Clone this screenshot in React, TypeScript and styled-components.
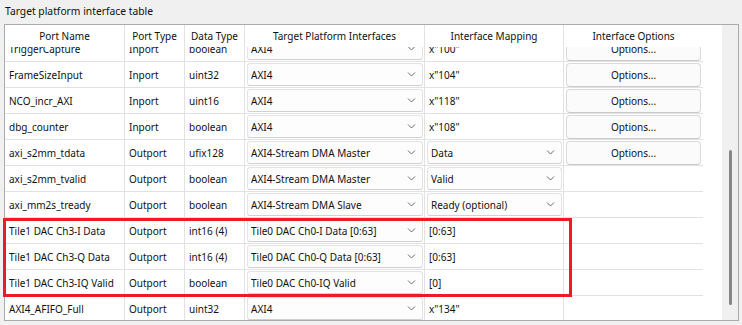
import React, { FC } from "react";
import styled, { createGlobalStyle } from "styled-components";

interface IPortRow {
  name: string;
  portType: string;
  dataType: string;
  target: string;
  mapping: string;
  mappingCombo?: boolean;
  options?: boolean;
}

const rows: IPortRow[] = [
  { name: "TriggerCapture", portType: "Inport", dataType: "boolean", target: "AXI4", mapping: 'x"100"', options: true },
  { name: "FrameSizeInput", portType: "Inport", dataType: "uint32", target: "AXI4", mapping: 'x"104"', options: true },
  { name: "NCO_incr_AXI", portType: "Inport", dataType: "uint16", target: "AXI4", mapping: 'x"118"', options: true },
  { name: "dbg_counter", portType: "Inport", dataType: "boolean", target: "AXI4", mapping: 'x"108"', options: true },
  { name: "axi_s2mm_tdata", portType: "Outport", dataType: "ufix128", target: "AXI4-Stream DMA Master", mapping: "Data", mappingCombo: true, options: true },
  { name: "axi_s2mm_tvalid", portType: "Outport", dataType: "boolean", target: "AXI4-Stream DMA Master", mapping: "Valid", mappingCombo: true },
  { name: "axi_mm2s_tready", portType: "Outport", dataType: "boolean", target: "AXI4-Stream DMA Slave", mapping: "Ready (optional)", mappingCombo: true },
  { name: "Tile1 DAC Ch3-I Data", portType: "Outport", dataType: "int16 (4)", target: "Tile0 DAC Ch0-I Data [0:63]", mapping: "[0:63]" },
  { name: "Tile1 DAC Ch3-Q Data", portType: "Outport", dataType: "int16 (4)", target: "Tile0 DAC Ch0-Q Data [0:63]", mapping: "[0:63]" },
  { name: "Tile1 DAC Ch3-IQ Valid", portType: "Outport", dataType: "boolean", target: "Tile0 DAC Ch0-IQ Valid", mapping: "[0]" },
  { name: "AXI4_AFIFO_Full", portType: "Outport", dataType: "uint32", target: "AXI4", mapping: 'x"134"' },
];

const headers = [
  "Port Name",
  "Port Type",
  "Data Type",
  "Target Platform Interfaces",
  "Interface Mapping",
  "Interface Options",
];

const Chevron: FC = () => (
  <svg width="9" height="5" viewBox="0 0 9 5">
    <polyline points="1,0.5 4.5,4 8,0.5" fill="none" stroke="#6a6a6a" strokeWidth="1" />
  </svg>
);

const Combo: FC<{ value: string }> = ({ value }) => (
  <ComboBox>
    <ComboText>{value}</ComboText>
    <Chevron />
  </ComboBox>
);

const App: FC = () => {
  return (
    <>
      <GlobalStyle />
      <Page>
        <Title>Target platform interface table</Title>
        <Frame>
          <Viewport>
            <HeaderRow>
              {headers.map((h) => (
                <HeaderCell key={h}>{h}</HeaderCell>
              ))}
            </HeaderRow>
            <Body>
              {rows.map((row) => (
                <React.Fragment key={row.name}>
                  <Cell>{row.name}</Cell>
                  <Cell>{row.portType}</Cell>
                  <Cell>{row.dataType}</Cell>
                  <Cell $combo>
                    <Combo value={row.target} />
                  </Cell>
                  {row.mappingCombo ? (
                    <Cell $combo>
                      <Combo value={row.mapping} />
                    </Cell>
                  ) : (
                    <Cell>{row.mapping}</Cell>
                  )}
                  <Cell $button>
                    {row.options && <OptionsButton>Options...</OptionsButton>}
                  </Cell>
                </React.Fragment>
              ))}
            </Body>
          </Viewport>
          <Track>
            <Thumb />
          </Track>
          <Highlight />
        </Frame>
      </Page>
    </>
  );
};

const GlobalStyle = createGlobalStyle`
  html, body {
    margin: 0;
    padding: 0;
    background: #f0f0f0;
  }
  body {
    font-family: "Noto Sans", "Open Sans", sans-serif;
    font-size: 10px;
    color: #111111;
  }
`;

const Page = styled.div`
  width: 742px;
  height: 325px;
  overflow: hidden;
  background: #f0f0f0;
`;

const Title = styled.div`
  height: 24px;
  padding: 3px 0 0 5px;
  box-sizing: border-box;
  line-height: 16px;
  font-size: 10.3px;
`;

const Frame = styled.div`
  position: relative;
  margin-left: 4px;
  width: 735px;
  height: 297px;
  box-sizing: border-box;
  border: 1px solid #ababab;
  display: flex;
  background: #ffffff;
`;

const Viewport = styled.div`
  flex: 1;
  overflow: hidden;
  background: #ffffff;
`;

const columns = "120px 60px 60px 180px 139px 140px";

const HeaderRow = styled.div`
  position: relative;
  z-index: 1;
  display: grid;
  grid-template-columns: ${columns};
  height: 22px;
  background: #ffffff;
`;

const HeaderCell = styled.div`
  display: flex;
  align-items: center;
  justify-content: center;
  border-right: 1px solid #e2e2e2;
  white-space: nowrap;
`;

const Body = styled.div`
  margin-top: -11px;
  display: grid;
  grid-template-columns: ${columns};
  grid-auto-rows: 26px;
`;

const Cell = styled.div<{ $combo?: boolean; $button?: boolean }>`
  display: flex;
  align-items: center;
  box-sizing: border-box;
  border-right: 1px solid #e2e2e2;
  border-bottom: 1px solid #e2e2e2;
  padding: ${(p) => (p.$combo ? "0 1px 0 2px" : p.$button ? "0 2px" : "0 4px")};
  white-space: nowrap;
  overflow: hidden;
`;

const ComboBox = styled.div`
  flex: 1;
  height: 23px;
  box-sizing: border-box;
  display: flex;
  align-items: center;
  padding: 0 6px 0 3px;
  border: 1px solid #e3e3e3;
  border-bottom-color: #d0d0d0;
  border-radius: 3px;
  background: #fdfdfd;
`;

const ComboText = styled.span`
  flex: 1;
  overflow: hidden;
`;

const OptionsButton = styled.div`
  flex: 1;
  height: 24px;
  box-sizing: border-box;
  display: flex;
  align-items: center;
  justify-content: center;
  border: 1px solid #dadada;
  border-bottom-color: #cacaca;
  border-radius: 4px;
  background: #fbfbfb;
`;

const Track = styled.div`
  width: 16px;
  padding: 125px 0 0 7px;
  box-sizing: border-box;
  background: #f0f0f0;
  margin-left: 19px;
`;

const Thumb = styled.div`
  width: 3px;
  height: 155px;
  border-radius: 2px;
  background: #878787;
`;

const Highlight = styled.div`
  position: absolute;
  left: -2px;
  top: 193px;
  width: 569px;
  height: 79px;
  box-sizing: border-box;
  border: 3px solid #ed1c24;
  pointer-events: none;
`;

export default App;
